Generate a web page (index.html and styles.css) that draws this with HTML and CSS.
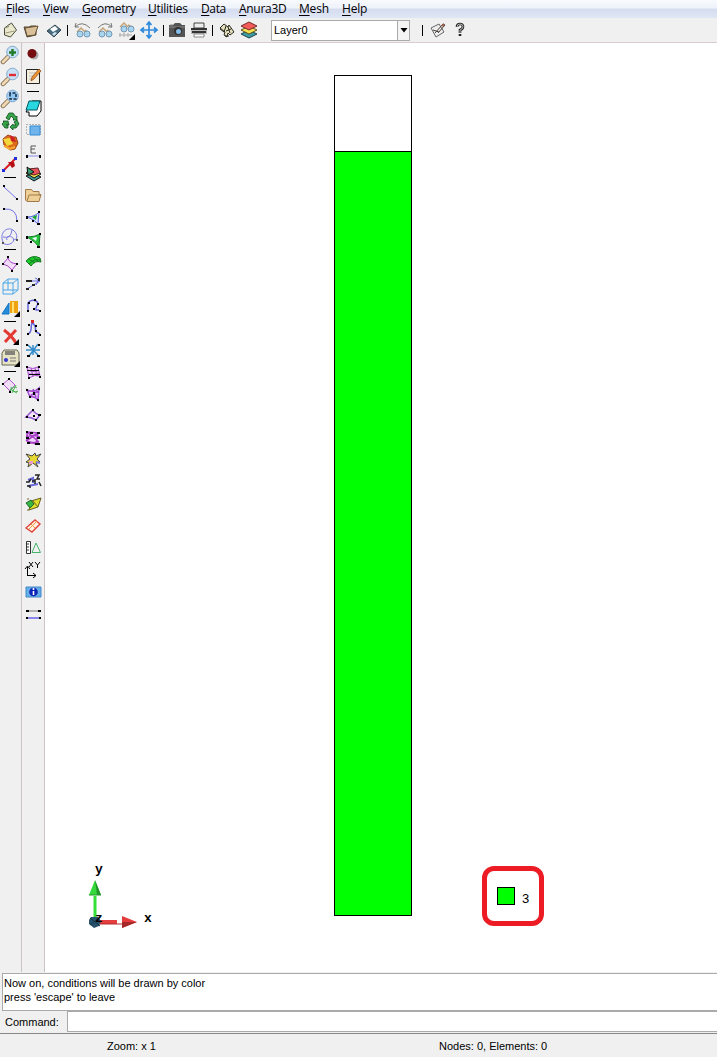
FILE: index.html
```html
<!DOCTYPE html>
<html lang="en">
<head>
<meta charset="utf-8">
<title>Anura3D</title>
<link rel="stylesheet" href="styles.css">
</head>
<body>
<div class="app">
  <nav class="menu">
    <span class="m-files"><u>F</u>iles</span><span class="m-view"><u>V</u>iew</span><span class="m-geometry"><u>G</u>eometry</span><span class="m-utilities"><u>U</u>tilities</span><span class="m-data"><u>D</u>ata</span><span class="m-anura"><u>A</u>nura3D</span><span class="m-mesh"><u>M</u>esh</span><span class="m-help"><u>H</u>elp</span>
  </nav>

  <header class="toolbar">
    <svg class="ic" viewBox="0 0 20 22"><path d="M4 9l7-5 5 7-6 7-6-2z" fill="#e9e8cd" stroke="#4b4b3c"/><path d="M4 9l4-1v-3M5 14l9-2" stroke="#999980" fill="none"/></svg>
    <svg class="ic" viewBox="0 0 22 22"><path d="M3 8h5l2-1h5v9l-9 2z" fill="#8d7654" stroke="#554731"/><path d="M4 9l13-2-3 9-8 1z" fill="#dac099" stroke="#665237"/></svg>
    <svg class="ic" viewBox="0 0 22 22"><path d="M4 12l8-6 6 5-7 7z" fill="#496b7d" stroke="#304450"/><path d="M7 10l5-3 3 3-5 3z" fill="#f9ffff"/><path d="M9 15l3-2 2 1-3 3z" fill="#c8e1ee"/></svg>
    <i class="bar b1"></i>
    <svg class="ic" viewBox="0 0 22 22"><path d="M3 8q7-7 15 1M3 8l1-4M3 8h4" stroke="#777" fill="none"/><path d="M5 13l4-4 4 4M13 11l4 3" stroke="#c4a477" stroke-width="1.5" fill="none"/><circle cx="8" cy="15" r="3" fill="#a9d5ed" stroke="#7197b9"/><circle cx="15" cy="15" r="3" fill="#a9d5ed" stroke="#7197b9"/></svg>
    <svg class="ic" viewBox="0 0 22 22"><path d="M4 9q7-8 14-1M18 8l-1-4M18 8h-4" stroke="#777" fill="none"/><path d="M5 13l4-4 4 4M13 11l4 3" stroke="#c4a477" stroke-width="1.5" fill="none"/><circle cx="8" cy="15" r="3" fill="#a9d5ed" stroke="#7197b9"/><circle cx="15" cy="15" r="3" fill="#a9d5ed" stroke="#7197b9"/></svg>
    <svg class="ic" viewBox="0 0 22 22"><path d="M4 8l4-4 4 4M12 6l4 2" stroke="#c4a477" stroke-width="1.5" fill="none"/><circle cx="8" cy="10" r="3" fill="#a9d5ed" stroke="#7197b9"/><circle cx="15" cy="10" r="3" fill="#a9d5ed" stroke="#7197b9"/><path d="M3 16h13M4 14v4M8 14v4M12 14v4" stroke="#aaa" fill="none"/><path d="M19 15v6h-6z"/></svg>
    <svg class="ic" viewBox="0 0 22 22"><path d="M11 4v14M4 11h14M8.500 6L11 3l2.500 3M8.500 16l2.500 3 2.500-3M6 8.500L3 11l3 2.500M16 8.500l3 2.500-3 2.500" stroke="#308ade" stroke-width="1.700" fill="none"/></svg>
    <i class="bar b2"></i>
    <svg class="ic" viewBox="0 0 22 22"><path d="M3 6h4l2-2h5l2 2h3v12H3z" fill="#555"/><path d="M3 8h16M4 6h3" stroke="#888"/><circle cx="12" cy="12" r="4" fill="#333"/><circle cx="12.500" cy="12.500" r="2.500" fill="#86bce8"/></svg>
    <svg class="ic" viewBox="0 0 22 22"><path d="M6 4h10v5H6z" fill="#eee" stroke="#444"/><path d="M3 9h16v6H3z" fill="#bbb"/><path d="M3 10h16M4 13h14" stroke="#333" stroke-width="2"/><path d="M6 15h10v3H6z" fill="#fff" stroke="#888"/></svg>
    <i class="bar b3"></i>
    <svg class="ic" viewBox="0 0 22 22"><path d="M4 9l4-4 4 3 1-2 5 7-4 3-2-2-1 4-3-2 1-3z" fill="#e4e0bd" stroke="#28281f"/><path d="M4 10l4 3 2-6M10 12l5-2M12 8l2 6M9 17h4" stroke="#28281f" fill="none"/></svg>
    <svg class="ic" viewBox="0 0 22 22"><path d="M3 15l8-4 8 4-8 4z" fill="#3b9aa2" stroke="#1e464c"/><path d="M3 11l8-4 8 4-8 4z" fill="#f6e34f" stroke="#604c18"/><path d="M3 7l8-4 8 4-8 4z" fill="#f35a5a" stroke="#762b2b"/></svg>
    <div class="combo"><span>Layer0</span><b><svg viewBox="0 0 8 5"><path d="M0.500 0h7L4 4.500z"/></svg></b></div>
    <i class="bar b4"></i>
    <svg class="ic ic-edit" viewBox="0 0 22 22"><path d="M4 9l8-4 5 8-8 5z" fill="#eee" stroke="#666"/><path d="M6 11l6 2M8 14l8-9 2 1-7 8" stroke="#493d38" fill="none"/><path d="M15 7l2-2" stroke="#9d584c" stroke-width="2"/></svg>
    <svg class="ic" viewBox="0 0 22 22"><path d="M8 8q0-3 3-3t3 2.500-3 3.500v3M11 15v2" stroke="#222" stroke-width="2.600" fill="none"/><path d="M8 8q0-3 3-3t3 2.500-3 3.500v3" stroke="#ddd" stroke-width=".8" fill="none"/></svg>
  </header>

  <main class="work">
    <aside class="tools first">
      <svg viewBox="0 0 20 22"><path d="M8 14l-5 5" stroke="#70583b" stroke-width="4.500" stroke-linecap="round"/><path d="M8 14l-5 5" stroke="#f1d9b4" stroke-width="3" stroke-linecap="round"/><circle cx="12.500" cy="9" r="5.800" fill="#c6e1f5" stroke="#82a9cf"/><path d="M12.500 6v7M9 9.500h7" stroke="#237b2c" stroke-width="2.400"/></svg>
      <svg viewBox="0 0 20 22"><path d="M8 14l-5 5" stroke="#70583b" stroke-width="4.500" stroke-linecap="round"/><path d="M8 14l-5 5" stroke="#f1d9b4" stroke-width="3" stroke-linecap="round"/><circle cx="12.500" cy="9" r="5.800" fill="#c6e1f5" stroke="#82a9cf"/><path d="M9 10h7" stroke="#e22936" stroke-width="2.400"/></svg>
      <svg viewBox="0 0 20 22"><path d="M8 14l-5 5" stroke="#70583b" stroke-width="4.500" stroke-linecap="round"/><path d="M8 14l-5 5" stroke="#f1d9b4" stroke-width="3" stroke-linecap="round"/><circle cx="12.500" cy="9" r="5.800" fill="#a4cff4" stroke="#82a9cf"/><path d="M10 8V6h6v6h-6V8" fill="#8fc5ef" stroke="#142c4b" stroke-width="1.500" stroke-dasharray="3 1.500"/></svg>
      <svg viewBox="0 0 20 22"><g fill="#38a348" stroke="#0a501c" stroke-width=".8"><path d="M6 9l3-5h4l3 4 1-1v4h-4l1-1-3-3-2 4z"/><path d="M14 13l3-2 2 4-3 4h-3v2l-3-3 3-3v1h3z"/><path d="M8 16v3H5l-3-4 2-2-1-1h5l1 4-2-1-1 1z"/></g></svg>
      <svg viewBox="0 0 20 22"><path d="M3 8l5-4 4 2 4 0 2 6-3 6-5 1-6-5z" fill="#dc6c1b" stroke="#974018"/><path d="M3 8l7-1 3 6-6 2z" fill="#f4d63d"/><path d="M10 4l4 2 2 5-5-1z" fill="#d02024"/><path d="M4 15l6 3 5-2" stroke="#f8ad32" stroke-width="2" fill="none"/></svg>
      <svg viewBox="0 0 20 22"><path d="M4 17L16 5" stroke="#d71920" stroke-width="2"/><path d="M8 9h6l1 4-3 2z" fill="#b60f13"/><path d="M2 16h3v3H2zM14 4h3v3h-3z" fill="#242ddc"/></svg>
      <i></i>
      <svg viewBox="0 0 20 22"><path d="M4 6l13 12" stroke="#7474eb"/><path d="M3 4h2v2H3zM16 17h2v2h-2z"/></svg>
      <svg viewBox="0 0 20 22"><path d="M4 6q13-1 13 12" stroke="#7474eb" fill="none"/><path d="M3 5h2v2H3zM16 17h2v2h-2z"/></svg>
      <svg viewBox="0 0 20 22"><path d="M3 18c5 4 13-1 10-5-2-3-8-1-6 2M3 17C-1 8 7 1 13 5s4 12 0 9M3 12q8 2 9-7" stroke="#7777e5" fill="none"/><path d="M2 17h2v2H2zM16 14h2v2h-2z" fill="#555"/></svg>
      <i></i>
      <svg viewBox="0 0 20 22"><path d="M8 5q1 5 9 6l-5 6Q8 12 3 11z" fill="#f1ddf8" stroke="#a542c4"/><path d="M7 3h2v2H7zM16 10h2v2h-2zM11 17h2v2h-2zM2 10h2v2H2z"/></svg>
      <svg viewBox="0 0 20 22"><path d="M3 8l5-4h10v11l-5 4H3zM3 8h10v11M13 8l5-4M8 4v11H3M8 15h10" fill="none" stroke="#4aa6e8"/></svg>
      <svg viewBox="0 0 20 22"><path d="M2 17l7-11v11z" fill="#238ddb" stroke="#1972bb"/><path d="M10 4h8v12h-8z" fill="#efa313"/><path d="M12 5h2v11h-2z" fill="#ffdf70"/><path d="M20 14v6h-6z"/></svg>
      <i></i>
      <svg viewBox="0 0 20 22"><path d="M4 5q8 6 12 13M16 5L5 17" stroke="#e33b34" stroke-width="3" fill="none"/><path d="M19 14v6h-6z"/></svg>
      <svg viewBox="0 0 20 22"><path d="M4 3h13l2 3v12H2V6z" fill="#e6e3c4" stroke="#66644f"/><path d="M5 4h10v4H5z" fill="#84837b"/><circle cx="6" cy="13" r="2" fill="#3434ce"/><path d="M10 11h6M10 14h6" stroke="#777"/><path d="M20 14v6h-6z"/></svg>
      <i></i>
      <svg viewBox="0 0 20 22"><path d="M3 9l6-5 6 6-5 6z" fill="#f2ddf8" stroke="#b456cc"/><path d="M2 8h2v2H2zM8 3h2v2H8zM9 16h2v2H9z"/><path d="M10 14l7 4M12 18l4-8M10 16q3-6 7-3M11 12q1 7 7 4" stroke="#48b554" fill="none"/></svg>
    </aside>
    <aside class="tools second">
      <svg viewBox="0 0 20 22"><circle cx="11" cy="12" r="4.500" fill="#aaa"/><circle cx="9" cy="10.500" r="4.500" fill="#750d10"/></svg>
      <svg viewBox="0 0 20 22"><path d="M3.500 4.500h13v14h-13z" fill="#f5eedc" stroke="#222"/><path d="M6 8h7M6 11h5M6 14h4" stroke="#bbb"/><path d="M8 16l1-4 7-8 2 2-7 8z" fill="#ee9632" stroke="#874015" stroke-width=".7"/></svg>
      <i></i>
      <svg viewBox="0 0 20 22"><path d="M3 15L9 4h9v10l-4 5H6v-4z" fill="#fff" stroke="#000"/><path d="M6 4h11l-3 9H3z" fill="#28d7df" stroke="#05565e"/></svg>
      <svg viewBox="0 0 20 22"><path d="M3.500 5.500h14v10h-14z" fill="none" stroke="#777" stroke-dasharray="1 2"/><path d="M7 7h10v9H7z" fill="#70b4ec" stroke="#338bd2"/></svg>
      <svg viewBox="0 0 20 22"><path d="M8 5h5M8 5v7M8 8h4M8 12h5" stroke="#555" fill="none"/><path d="M5 15h11" stroke="#8b8be6"/><path d="M3 14h2v3H3zM16 14h2v3h-2z"/></svg>
      <svg viewBox="0 0 20 22"><path d="M3 13l7-3 8 4-7 4z" fill="#439999" stroke="#111"/><path d="M3 10l7-3 8 4-7 4z" fill="#e8df4a" stroke="#111"/><path d="M5 6l10-1 2 5-6 2-7-2z" fill="#e9535a" stroke="#602426"/><path d="M4 4l7 5-6 3z" fill="#3b9c72" stroke="#111"/></svg>
      <svg viewBox="0 0 20 22"><path d="M2.500 15V4.500h6l1.500 2h6v3h2l-2 7h-12z" fill="#eed096" stroke="#a17a47"/><path d="M4 16l2-6h12" stroke="#a17a47" fill="none"/></svg>
      <svg viewBox="0 0 20 22"><path d="M4 10q8 0 12-5l-1 12q-4-5-11-7z" fill="#dce5ff" stroke="#555edc"/><path d="M9 10l5-2-1 5z" fill="#15a82b"/><path d="M3 9h2v3H3zM15 4h2v2h-2zM14 16h3v2h-3zM9 13h2v2H9z"/></svg>
      <svg viewBox="0 0 20 22"><path d="M4 8q8 0 13-3l-1 13q-4-6-12-10z" fill="#22c334" stroke="#137f2b"/><path d="M9 9l5-1-1 4z" fill="#eff"/><path d="M3 7h2v3H3zM16 4h2v2h-2zM14 17h3v2h-3zM7 12h2v2H7z"/></svg>
      <svg viewBox="0 0 20 22"><path d="M3 10q6-7 14-3l1 4q-6-2-10 4z" fill="#20ca2e" stroke="#167621"/><path d="M6 8l6 4M10 6l6 5M6 13q6-6 11-4" stroke="#117b1c" fill="none"/></svg>
      <svg viewBox="0 0 20 22"><path d="M4 8h13L4 16M12 5q5 1 1 7" stroke="#6868df" fill="none"/><path d="M3 7h6v2H3zM15 5h2v3h-2zM3 15h3v2H3zM9 11h3v2H9z" fill="#222"/></svg>
      <svg viewBox="0 0 20 22"><path d="M5 15V8q3-4 8-2c5 3-2 6 0 9h3" stroke="#6666db" stroke-width="1.500" fill="none"/><path d="M4 15h2v2H4zM5 7h2v2H5zM11 4h2v2h-2zM14 8h2v2h-2zM10 13h2v2h-2zM16 15h2v2h-2z"/></svg>
      <svg viewBox="0 0 20 22"><path d="M5 17c5-2 2-7 4-11 6 3 2 7 4 9l4 2" stroke="#6666db" stroke-width="1.500" fill="none"/><path d="M8 3h3v3H8z" fill="#d32727"/><path d="M4 16h2v2H4zM5 7h2v2H5zM12 8h2v2h-2zM12 13h2v2h-2zM16 17h2v2h-2z"/></svg>
      <svg viewBox="0 0 20 22"><path d="M3 11h14M5 6l10 10M15 5L6 17M10 6v10" stroke="#348dca" stroke-width="1.500"/><path d="M3 5h2v2H3zM15 5h2v2h-2zM4 16h3v2H4zM14 16h3v2h-3z"/></svg>
      <svg viewBox="0 0 20 22"><path d="M4 6q6 3 11 0l2 9q-6-2-11 2zM5 9q7 3 11 0M5 13q7 1 11-1M8 7l2 9M12 7l2 8" stroke="#a84dd0" fill="#eed3f6"/><path d="M3 5h2v2H3zM15 5h2v2h-2zM5 16h2v2H5zM16 15h2v2h-2zM4 9h12v1H4zM6 13h11v1H6z"/></svg>
      <svg viewBox="0 0 20 22"><path d="M4 7q7 3 12-2l-1 12q-3-4-8-3zM10 6l3 8M7 13l8-5" stroke="#a24bd1" stroke-width="1.500" fill="#efd5f7"/><path d="M3 6h2v2H3zM15 5h2v2h-2zM14 16h2v2h-2zM6 13h2v2H6zM10 9h2v3h-2z"/></svg>
      <svg viewBox="0 0 20 22"><path d="M3 12l7-7q2 4 7 5l-4 5q-5-3-10-3z" stroke="#9455cf" stroke-width="1.500" fill="#f3e6f9"/><path d="M3 11h2v2H3zM9 4h2v2H9zM15 9h3v2h-3zM10 10h2v2h-2zM12 14h2v2h-2z"/></svg>
      <svg viewBox="0 0 20 22"><path d="M4 5l11 1-2 11-9-3zM4 5l12 10M15 6L3 14M3 10q8-3 14 0M5 16l11-1" stroke="#a540c5" stroke-width="1.600" fill="#efd7f6"/><path d="M3 4h2v2H3zM7 5h3v2H7zM14 5h3v2h-3zM3 10h3v2H3zM14 10h3v2h-3zM4 15h3v2H4zM12 16h5v2h-5z"/></svg>
      <svg viewBox="0 0 20 22"><path d="M3 5l6 2 3-3 1 3 5-2-4 5 3 3-4 1 2 4-5-4-5 4 1-4-3-1 4-3z" fill="#e6d735" stroke="#444"/><path d="M6 12h4v3H6z" fill="#ec9ad2"/><path d="M13 13l4 1" stroke="#7777df" stroke-width="2"/></svg>
      <svg viewBox="0 0 20 22"><path d="M5 9l5-2v5M5 15l10-2" stroke="#6969e0" stroke-width="2" fill="none"/><path d="M12 4h4l-2 4h3M3 11h3l2-3M12 8v5M16 11l2 4M4 15h3v2M9 10h3" stroke="#222" stroke-width="1.500" fill="none"/></svg>
      <svg viewBox="0 0 20 22"><path d="M8 8l10-3-3 9-9 3z" fill="#dfdb29" stroke="#655d24"/><path d="M3 10l5-3 3 4-4 4z" fill="#36b742" stroke="#256429"/><path d="M9 7l6 7M5 16v2M6 6H4" stroke="#706325"/></svg>
      <svg viewBox="0 0 20 22"><path d="M3 13l9-8 5 4-8 8z" fill="#fff2e5" stroke="#e0453b" stroke-width="1.400"/><path d="M6 14l8-8M8 9l4 4" stroke="#ef9b38"/></svg>
      <svg viewBox="0 0 20 22"><path d="M3.500 4.500h4v12h-4z" fill="#fff" stroke="#333"/><path d="M4 7h2M4 10h2M4 13h2" stroke="#333"/><path d="M13 6l4.500 9.500H9z" fill="none" stroke="#45b56a"/></svg>
      <svg viewBox="0 0 20 22"><path d="M4.500 17V8M2 10l2.500-3L7 10M4 16.500h9M10 14l3 2.500-3 2.500M6 3l4 5M10 3L6 8M12 3l2.500 3L17 3M14.500 6v3" stroke="#000" fill="none"/></svg>
      <svg viewBox="0 0 20 22"><path d="M3 6h15v10H3z" fill="#64aee8" stroke="#438aca"/><circle cx="10.500" cy="11" r="4.300" fill="#0b23b6"/><path d="M10.500 7v2M10.500 10v4" stroke="#fff" stroke-width="1.600"/></svg>
      <svg viewBox="0 0 20 22"><path d="M4 8h13" stroke="#777"/><path d="M3 7h3v2H3zM15 7h3v2h-3zM3 14h2v2H3zM16 14h2v2h-2z"/><path d="M5 15h11" stroke="#8989ed" stroke-width="2"/></svg>
    </aside>

    <section class="canvas">
      <div class="column"><div class="empty"></div><div class="filled"></div></div>
      <svg class="axes" viewBox="0 0 80 70">
        <path d="M18.500 54V30h3v24z" fill="#35df3a"/><path d="M20 14l6 15H14z" fill="#35d93a"/><path d="M20 14l6 15h-4z" fill="#25932c"/><path d="M14 29h12" stroke="#239c29"/>
        <path d="M22 54h20v4H22z" fill="#e53e3e"/><path d="M47 50l15 6-15 6z" fill="#e43c3c"/><path d="M47 56h15l-15 6z" fill="#a62929"/><path d="M22 58h25" stroke="#b52d2d"/>
        <path d="M16 51h7l3 4-2 5-5 2-5-4v-4z" fill="#27506c"/><path d="M15 52l10 8M15 59l9-7" stroke="#133649"/>
        <text x="20" y="7">y</text><text x="20" y="56">z</text><text x="69" y="56">x</text>
      </svg>
      <div class="legend"><i></i><span>3</span></div>
    </section>
  </main>

  <div class="messages">Now on, conditions will be drawn by color<br>press 'escape' to leave</div>
  <div class="command"><label>Command:</label><div class="entry"></div></div>
  <footer class="status"><span>Zoom: x 1</span><span>Nodes: 0, Elements: 0</span></footer>
</div>
</body>
</html>
```
FILE: styles.css
```css
* { box-sizing: border-box; }
body { margin: 0; background: #f0f0f0; color: #000; font-family: "Liberation Sans", Arial, sans-serif; }
.app { width: 717px; height: 1057px; display: flex; flex-direction: column; overflow: hidden; }

.menu { height: 18px; flex: none; display: flex; padding-left: 6px; background: linear-gradient(#f8fafd 0, #eef2fa 45%, #d5dcef 50%, #dfe6f5 100%); font: 12px/18px "Open Sans", "Noto Sans", sans-serif; white-space: nowrap; }
.menu span { flex: none; }
.menu u { text-underline-offset: 2px; text-decoration-thickness: 1px; }
.m-files { width: 37px; letter-spacing: -.25px; }
.m-view { width: 39px; letter-spacing: -.25px; }
.m-geometry { width: 66px; letter-spacing: -.25px; }
.m-utilities { width: 53px; letter-spacing: -.25px; }
.m-data { width: 38px; letter-spacing: -.35px; }
.m-anura { width: 60px; letter-spacing: -.3px; }
.m-mesh { width: 43px; letter-spacing: -.2px; }
.m-help { width: 30px; letter-spacing: -.2px; }

.toolbar { height: 25px; flex: none; display: flex; align-items: center; border-bottom: 1px solid #d9cccd; background: #f0f0f0; }
.ic { width: 22px; height: 22px; flex: none; }
.ic:first-child { width: 21px; }
.bar { flex: none; width: 1px; height: 11px; background: #000; }
.b1 { margin: 0 4px 0 2px; }
.b2 { margin: 0 2px 0 3px; }
.b3 { margin: 0 3px 0 2px; }
.b4 { margin: 0 4px 0 12px; }
.combo { flex: none; width: 139px; height: 21px; margin-left: 11px; display: flex; background: #fff; border: 1px solid #aaa; font-size: 11px; line-height: 19px; }
.combo span { flex: 1; padding-left: 2px; }
.combo b { width: 12px; display: flex; align-items: center; justify-content: center; border-left: 1px solid #aaa; background: #f4f4f4; }
.combo b svg { width: 8px; height: 5px; }

.work { height: 929px; flex: none; display: flex; }
.tools { flex: none; display: flex; flex-direction: column; border-right: 1px solid #cdc2c3; }
.tools svg { width: 20px; height: 22px; flex: none; }
.tools i { flex: none; width: 12px; height: 1px; background: #000; }
.first { width: 22px; }
.first i { margin: 2px 0 3px 4px; }
.second { width: 23px; padding-left: 1px; }
.second i { margin: 4px 0 5px 4px; }

.canvas { position: relative; flex: 1; background: #fff; }
.column { position: absolute; left: 289px; top: 32px; width: 78px; height: 841px; border: 1px solid #000; display: flex; flex-direction: column; }
.empty { height: 76px; border-bottom: 1px solid #000; }
.filled { flex: 1; background: #0f0; }
.axes { position: absolute; left: 30px; top: 823px; width: 80px; height: 70px; overflow: visible; }
.axes text { font: bold 13px "Liberation Mono", monospace; }
.legend { position: absolute; left: 437px; top: 823px; width: 62px; height: 60px; display: flex; align-items: center; padding-left: 10px; border: 5px solid #ed1c24; border-radius: 12px; }
.legend i { width: 18px; height: 18px; border: 1px solid #000; background: #0f0; }
.legend span { margin: 5px 0 0 7px; font-size: 13px; }

.messages { flex: none; height: 38px; margin: 1px 0 0 2px; padding: 2px 1px; background: #fff; border: 1px solid #aaa; border-right: 0; font-size: 11px; line-height: 14px; white-space: nowrap; }
.command { flex: none; height: 22px; display: flex; font-size: 11px; }
.command label { width: 67px; padding-left: 5px; line-height: 23px; }
.entry { flex: 1; height: 21px; background: #fff; border: 1px solid #aaa; border-right: 0; }
.status { flex: 1; display: flex; border-top: 1px solid #888; font-size: 11px; line-height: 24px; }
.status span:first-child { width: 439px; padding-left: 107px; }
```
